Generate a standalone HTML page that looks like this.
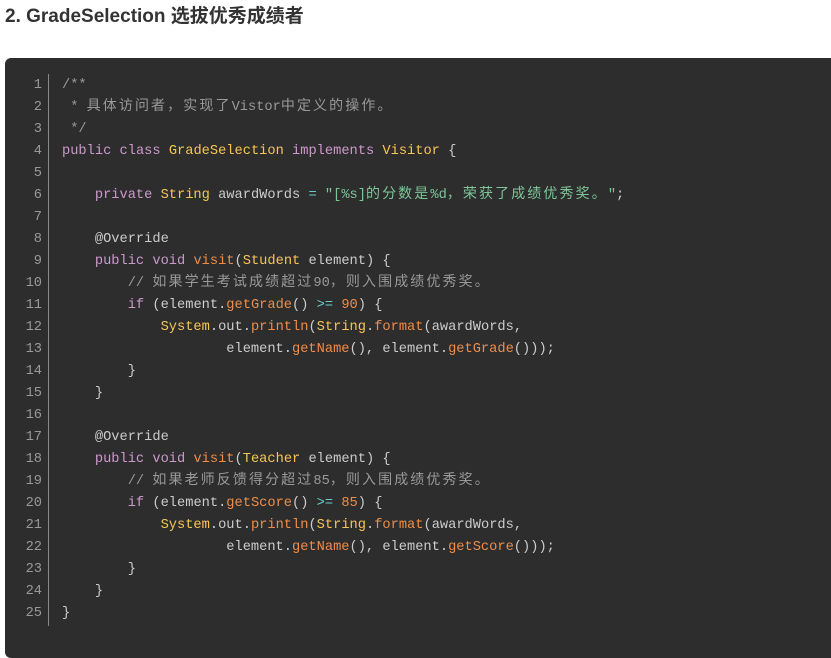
<!DOCTYPE html>
<html><head><meta charset="utf-8"><style>
body{margin:0;background:#fff;width:831px;height:637px;overflow:hidden;font-family:"Liberation Sans","Noto Sans CJK SC",sans-serif}
h3{position:absolute;left:5px;top:3px;margin:0;font-size:19px;font-weight:bold;color:#333;line-height:28px}
.blk{position:absolute;left:5px;top:58px;width:840px;height:600px;background:#2d2d2d;border-radius:6px}
.ln{position:absolute;left:0;top:17px;width:37px;text-align:right;color:#999;font:13.7px/22px "Liberation Mono","Noto Sans CJK SC",monospace;margin:0}
.gut{position:absolute;left:43px;top:16px;width:1px;height:552px;background:#888}
pre{position:absolute;left:57px;top:17px;margin:0;color:#ccc;font:13.7px/22px "Liberation Mono","Noto Sans CJK SC",monospace}
.z{font-size:14px;letter-spacing:2.1px;line-height:10px}
.c{color:#999}.k{color:#cc99cd}.t{color:#f8c555}.s{color:#7ec699}.f{color:#f08d49}.o{color:#67cdcc}
</style></head><body>
<h3>2. GradeSelection 选拔优秀成绩者</h3>
<div class="blk">
<pre class="ln">1
2
3
4
5
6
7
8
9
10
11
12
13
14
15
16
17
18
19
20
21
22
23
24
25</pre>
<div class="gut"></div>
<pre><span class="c">/**
 * <span class="z">具体访问者，实现了</span>Vistor<span class="z">中定义的操作。</span>
 */</span>
<span class="k">public</span> <span class="k">class</span> <span class="t">GradeSelection</span> <span class="k">implements</span> <span class="t">Visitor</span> {

    <span class="k">private</span> <span class="t">String</span> awardWords <span class="o">=</span> <span class="s">"[%s]<span class="z">的分数是</span>%d<span class="z">，荣获了成绩优秀奖。</span>"</span>;

    @Override
    <span class="k">public</span> <span class="k">void</span> <span class="f">visit</span>(<span class="t">Student</span> element) {
        <span class="c">// <span class="z">如果学生考试成绩超过</span>90<span class="z">，则入围成绩优秀奖。</span></span>
        <span class="k">if</span> (element.<span class="f">getGrade</span>() <span class="o">&gt;=</span> <span class="f">90</span>) {
            <span class="t">System</span>.out.<span class="f">println</span>(<span class="t">String</span>.<span class="f">format</span>(awardWords,
                    element.<span class="f">getName</span>(), element.<span class="f">getGrade</span>()));
        }
    }

    @Override
    <span class="k">public</span> <span class="k">void</span> <span class="f">visit</span>(<span class="t">Teacher</span> element) {
        <span class="c">// <span class="z">如果老师反馈得分超过</span>85<span class="z">，则入围成绩优秀奖。</span></span>
        <span class="k">if</span> (element.<span class="f">getScore</span>() <span class="o">&gt;=</span> <span class="f">85</span>) {
            <span class="t">System</span>.out.<span class="f">println</span>(<span class="t">String</span>.<span class="f">format</span>(awardWords,
                    element.<span class="f">getName</span>(), element.<span class="f">getScore</span>()));
        }
    }
}</pre>
</div>
</body></html>
